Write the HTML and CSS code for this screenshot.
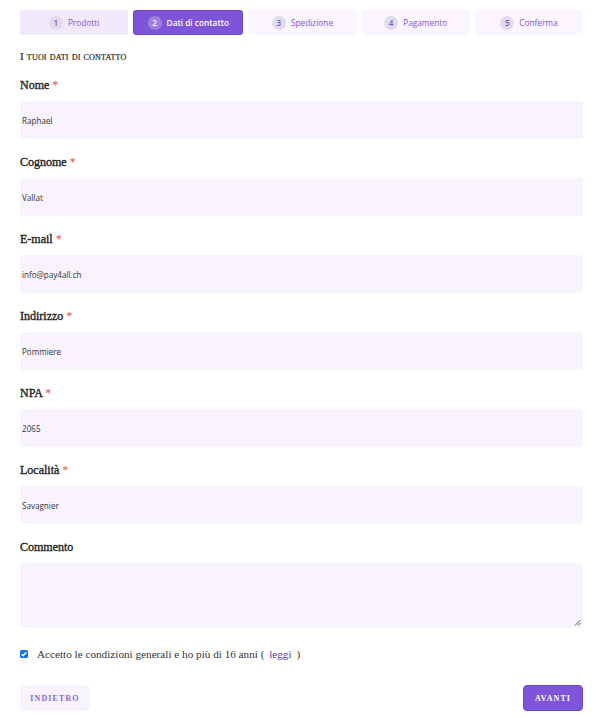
FILE: index.html
```html
<!DOCTYPE html>
<html lang="it">
<head>
<meta charset="utf-8">
<title>Dati di contatto</title>
<link rel="stylesheet" href="styles.css">
</head>
<body>
<div class="page">
  <nav class="steps">
    <div class="step done"><span class="num">1</span>Prodotti</div>
    <div class="step active"><span class="num">2</span>Dati di contatto</div>
    <div class="step"><span class="num">3</span>Spedizione</div>
    <div class="step"><span class="num">4</span>Pagamento</div>
    <div class="step"><span class="num">5</span>Conferma</div>
  </nav>
  <h2 class="section-title">I tuoi dati di contatto</h2>
  <form class="form">
    <div class="field">
      <label class="label">Nome <span class="req">*</span></label>
      <div class="input">Raphael</div>
    </div>
    <div class="field">
      <label class="label">Cognome <span class="req">*</span></label>
      <div class="input">Vallat</div>
    </div>
    <div class="field">
      <label class="label">E-mail <span class="req">*</span></label>
      <div class="input">info@pay4all.ch</div>
    </div>
    <div class="field">
      <label class="label">Indirizzo <span class="req">*</span></label>
      <div class="input">Pommiere</div>
    </div>
    <div class="field">
      <label class="label">NPA <span class="req">*</span></label>
      <div class="input">2065</div>
    </div>
    <div class="field">
      <label class="label">Località <span class="req">*</span></label>
      <div class="input">Savagnier</div>
    </div>
    <div class="field">
      <label class="label">Commento</label>
      <div class="textarea">
        <svg class="grip" width="7" height="7" viewBox="0 0 7 7"><path d="M6.5 1 L1 6.5 M6.5 4 L4 6.5" stroke="#555" stroke-width="1"/></svg>
      </div>
    </div>
    <div class="agree">
      <span class="check"><svg width="8" height="8" viewBox="0 0 8 8"><path d="M1.6 4.2 L3.3 5.8 L6.4 2.2" fill="none" stroke="#fff" stroke-width="1.4"/></svg></span>
      <span>Accetto le condizioni generali e ho più di 16 anni ( <a class="link">leggi</a> )</span>
    </div>
    <div class="actions">
      <span class="btn back">Indietro</span>
      <span class="btn next">Avanti</span>
    </div>
  </form>
</div>
</body>
</html>
```

FILE: styles.css
```css
* { box-sizing: border-box; }
body { margin: 0; background: #fff; }
.page { padding: 10px 17px 0 20px; }
.steps { display: flex; gap: 5px; }
.step {
  flex: 1;
  height: 25px;
  border-radius: 3px;
  background: #faf5fe;
  display: flex;
  align-items: center;
  justify-content: center;
  gap: 5px;
  font-family: "Open Sans", "Noto Sans", sans-serif;
  font-size: 8.3px;
  color: #7e55d8;
}
.step.done { background: #f3e9fd; }
.step.active { background: #7e55d8; color: #fff; font-weight: 600; border: 1px solid #6c45c9; }
.num {
  width: 14px; height: 14px; border-radius: 50%;
  background: #e0dcea;
  display: inline-flex; align-items: center; justify-content: center;
  font-size: 8px; color: #7e55d8; font-weight: 600;
}
.step.active .num { background: rgba(255,255,255,0.25); color: #fff; }
.section-title {
  margin: 14px 0 14px;
  font-family: "Liberation Serif", serif;
  font-size: 11px;
  line-height: 14px;
  font-weight: 400;
  font-variant: small-caps;
  text-transform: lowercase;
  letter-spacing: 0.2px;
  color: #2e2420;
  -webkit-text-stroke: 0.2px #2e2420;
}
.section-title::first-letter { text-transform: uppercase; }
.field { margin-bottom: 15px; }
.label {
  display: block;
  height: 16px;
  margin-bottom: 8px;
  font-family: "Liberation Serif", serif;
  font-size: 12px;
  line-height: 16px;
  font-weight: 400;
  color: #222;
  -webkit-text-stroke: 0.35px #222;
}
.req { color: #d9534f; -webkit-text-stroke: 0; }
.input {
  height: 38px;
  background: #f9f3fe;
  border-radius: 3px;
  padding: 0 2px;
  display: flex; align-items: center;
  font-family: "Open Sans", "Noto Sans", sans-serif;
  font-size: 8.1px;
  color: #333;
}
.textarea {
  height: 65px;
  background: #f9f3fe;
  border-radius: 3px;
  position: relative;
}
.grip { position: absolute; right: 2px; bottom: 2px; }
.agree {
  margin-top: 18px;
  display: flex; align-items: center; gap: 9px;
  font-family: "Liberation Serif", serif;
  font-size: 11.2px;
  line-height: 16px;
  color: #333;
}
.check {
  width: 8px; height: 8px; border-radius: 1.5px;
  background: #1a6fe0;
  display: inline-flex; align-items: center; justify-content: center;
}
.link { color: #5b34b5; padding: 0 2px; }
.actions { margin-top: 23px; display: flex; justify-content: space-between; }
.btn {
  height: 26px;
  display: inline-flex; align-items: center; justify-content: center;
  border-radius: 4px;
  font-family: "Liberation Serif", serif;
  font-size: 8px;
  font-weight: 700;
  letter-spacing: 1.1px;
  text-transform: uppercase;
}
.btn.back { width: 70px; background: #f9f3fe; color: #8a63d8; }
.btn.next { width: 60px; background: #7e55d8; color: #fff; border: 1px solid #6c45c9; }
```
